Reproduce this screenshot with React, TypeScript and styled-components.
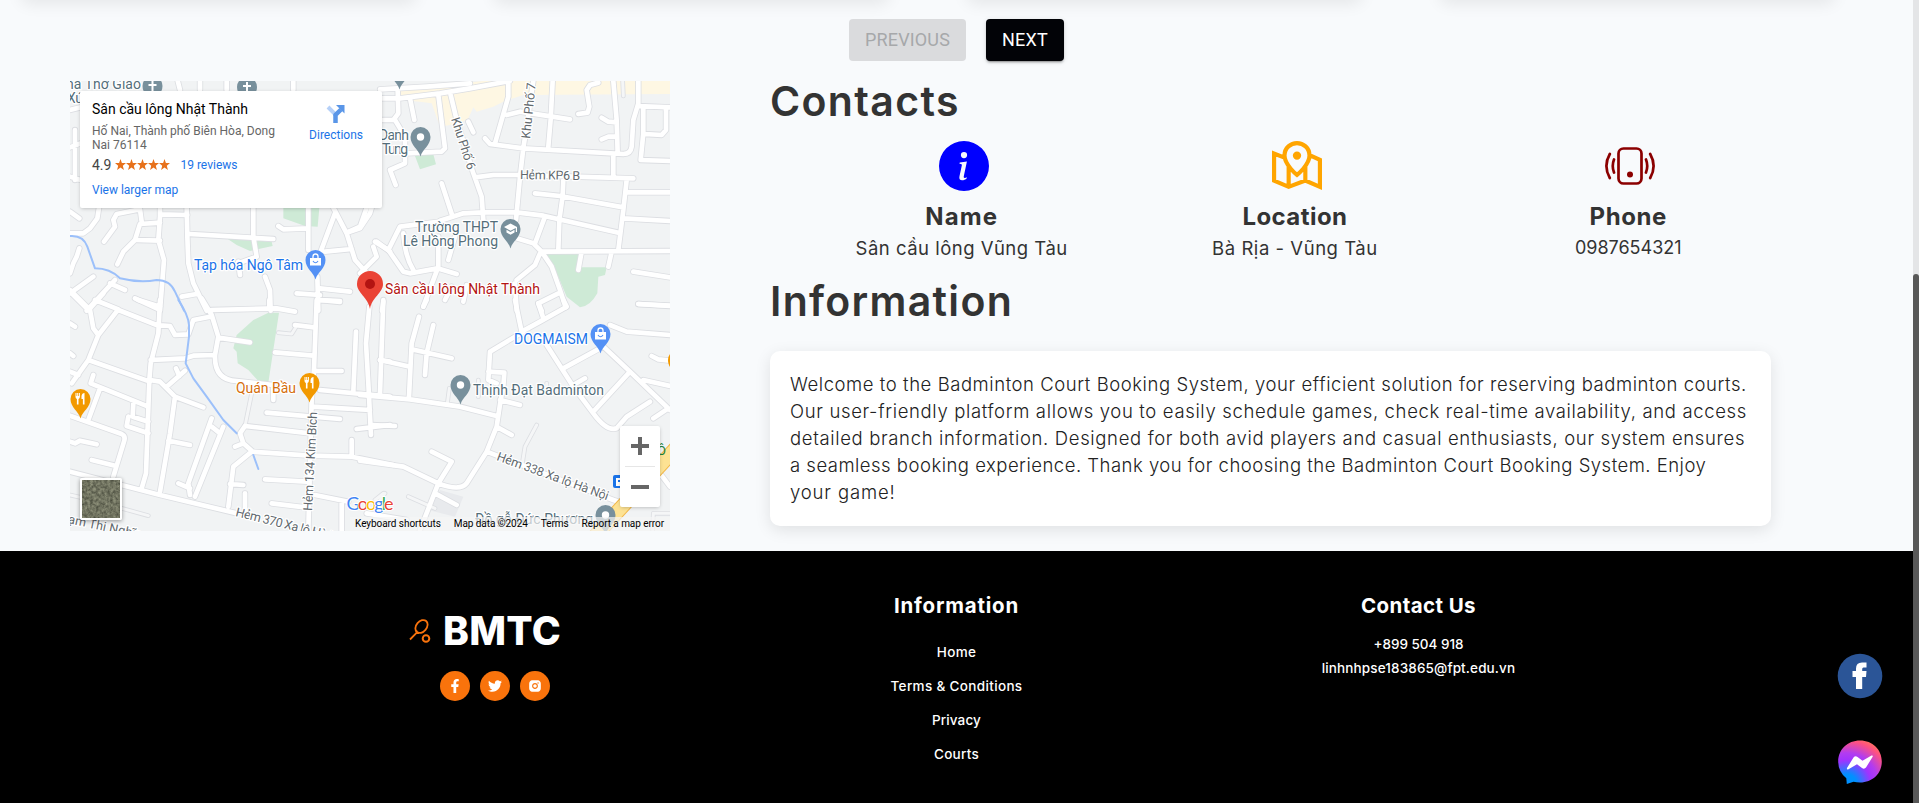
import React from "react";
import styled, { createGlobalStyle } from "styled-components";
import { BsInfoCircleFill } from "react-icons/bs";
import { GrMapLocation } from "react-icons/gr";
import { FaFacebookF, FaTwitter } from "react-icons/fa";
import { RiInstagramFill } from "react-icons/ri";

const Global = createGlobalStyle`
  * { box-sizing: border-box; }
  body { margin: 0; background: #f8fafc; font-family: Inter, sans-serif; color: #333; overflow: hidden; }
  p, h2, h3 { margin: 0; }
`;

type Tile = {
  x: number;
  y: number;
  roads: string;
  lanes?: string;
  river?: string;
  parks: string;
};

/* Map geometry is stored per quadrant, three units to the pixel. */
const tiles: Tile[] = [
  {
    x: -10, y: -11,
    roads:
      "M350 20L360 60M420 30V60M500 30V60M700 30V60M30 120L62 112M30 232L62 220M30 320L62 330M45 180V330M300 410L300 440L295 510L312 570L300 722M380 410L382 500L385 580L400 640L440 722M300 433L382 435M300 458L240 462L225 510L190 545L172 583M230 510L300 512M132 515L165 470L160 450L170 432L240 418L245 455M30 425L58 445M30 490L70 490L90 475L112 445L117 413M58 535L50 560L40 580L30 610M30 670L100 620M30 665L80 715M80 722L165 630M150 640L195 660M225 685L300 720M390 492L640 507M580 413L580 500L590 560M745 413V540M655 468L670 478L745 475M820 413L860 490L885 570L930 620M825 430L780 550M860 488L900 475L930 430L935 413M795 545L875 537M950 515L990 545M772 620L775 722M710 670L780 675M780 655L870 665M780 690L840 693M615 620L630 660L632 722M535 575L540 615M365 680L410 672M540 578L590 560",
    river: "M30 498Q70 495 82 530L105 595Q150 595 180 625Q240 640 290 630Q330 630 345 665L372 722",
    parks: "M670 413H778L773 470L735 468L670 445ZM500 505L635 515L638 528L570 543L530 525Z",
  },
  {
    x: 290, y: -11,
    roads:
      "M60 85L120 85L240 70L330 55L450 33M60 58L200 50L330 40M113 60L115 130L100 150H66M105 150L135 200V280L90 300L107 345M150 85L163 150M235 75L255 235L245 245L140 250M272 75L290 150M340 310L365 380L370 450M290 150L340 310M325 155L340 187M445 33V80L405 220M440 135L480 125L630 148M375 205L390 222L490 235L790 252Q812 252 815 230L820 150L835 100V33M520 33L490 235L480 320L468 450M578 33L572 148L565 230M715 38L690 45L680 60L688 110L683 128L655 132M760 33L770 150L773 250M725 143L745 155L770 157M725 208L745 200H770M835 108L930 112M850 115V190L842 270L930 273M918 115V180L905 195L855 192M760 255V318M345 322L400 315H480L820 325M800 330L790 420L775 540M800 367H930M525 370L600 378L790 412M610 330L608 378L598 450L595 540M790 445L930 453M278 440L310 430L370 427H470L550 437L775 488M245 340L278 440L240 452M553 445L525 520M470 505L520 520L545 545L930 543M545 545L575 590L600 660L617 712M540 550L525 585L470 630M665 545L655 600M755 545L745 590M820 605L930 622M835 702L930 708M240 455L120 470L85 540M45 515L85 540L130 605L150 610L232 595L290 612M130 490Q135 560 160 600M235 500V590L190 710M285 500L265 570M40 530L50 560L0 610M20 413L0 470L-40 488M465 640L470 722M595 670L535 700L545 722M255 690L275 650M310 695L320 645M70 695L66 722",
    lanes: "M788 33L790 78",
    parks: "M548 550H665L660 592H740L735 615L715 620L712 670Q690 710 660 712L620 680L595 620ZM165 258L220 253L228 283L180 298Z",
  },
  {
    x: -10, y: 219,
    roads:
      "M30 -30L90 30L100 85L115 105M90 25L130 -20M105 0L175 28L115 105L85 180L35 250M175 30L290 75L330 78L345 105L385 103L400 60L450 50M235 0L300 20M300 0L295 100L272 190L268 240L258 520L245 565M30 70L45 80M30 160L40 168M85 180L270 245M272 180L375 175L400 167L465 165M425 -5L455 45L475 110L465 165Q462 240 530 243L640 255M455 30L650 25L705 35M628 0V25M475 113L570 127M100 225L92 250L265 320M120 265L85 360M220 310L218 350L265 365M205 350L200 378L265 400M30 215L55 225M30 347L185 402Q198 408 192 425L160 530M270 240L300 245L345 290L430 322M345 290L330 400L300 575M320 260L375 212M348 205L358 228M325 422L390 435M455 355L385 550L390 585M455 380L480 400M490 380L405 590M355 550L390 565M30 515L300 585L530 640M30 425L45 430L60 422L110 433M95 480L165 497M575 455L520 500L505 620M510 552L550 555M555 580V630M555 378L540 400L550 430L575 452M525 440L550 430M555 378L750 400M575 455L750 467L875 470L1000 495M875 420V470M620 338L840 357M770 0L762 210L755 300L745 692M765 213L845 213M645 157L760 167M705 75L762 82M780 270L990 290M760 320L930 330M888 95L880 275M928 20L918 130L925 250L933 405M970 0L960 280M960 180L990 185M890 387L990 375M615 538L740 545M635 610L735 622M765 585L865 605M845 610V692M640 260V300M780 0L840 6",
    lanes: "M655 98L695 102L710 78M575 280L555 378M30 585L60 592M185 625L265 647M945 600L970 580",
    river: "M355 0Q385 45 387 75V110L377 190L400 235L440 290L490 360L530 400M580 465L595 507",
    parks: "M657 38L625 248L597 245L565 210L533 190L530 155L520 145L530 105L580 60L625 38Z",
  },
  {
    x: 290, y: 219,
    roads:
      "M60 180L150 200M177 50L155 130L147 290M155 148L275 175M220 75L200 160L195 225M0 285L150 298L300 320L410 348M33 375L105 378M490 95L390 155L385 240L410 250M385 215L433 218L430 260L422 300L410 380L380 455L320 550Q300 575 235 550L130 500L0 482M420 300L480 315M410 380L455 405M465 0L485 95L540 65L620 20L610 0M535 10L550 55M560 135L640 260L700 340Q740 395 770 385L800 350L870 305M610 205L720 145M720 130L810 215L930 330M810 215L700 335M640 255L675 235M750 75L800 95L930 105M835 12L930 17M875 168L895 178L930 182M850 240L930 258M925 325L880 355M380 455L760 600L790 610M215 455L275 485L235 550L180 690M225 580L290 615M900 520L930 560M190 20L200 0M20 640L140 660",
    lanes: "M487 490L495 440L530 375M145 590L225 625M262 310L268 265M355 240V290M878 690L880 640L930 640M60 600L75 580M560 250V260",
    parks: "",
  },
];

type Pin = { x: number; y: number; color: string; kind: "dot" | "cross" | "bag" | "fork" | "cap" };
const pins: Pin[] = [
  { x: 82.5, y: 5, color: "#78909c", kind: "cross" },
  { x: 177, y: 6, color: "#78909c", kind: "cross" },
  { x: 350.5, y: 56, color: "#78909c", kind: "dot" },
  { x: 329.5, y: -11, color: "#78909c", kind: "dot" },
  { x: 440.5, y: 148, color: "#78909c", kind: "cap" },
  { x: 245.5, y: 179, color: "#5491f5", kind: "bag" },
  { x: 530.5, y: 253, color: "#5491f5", kind: "bag" },
  { x: 239.5, y: 302, color: "#f29900", kind: "fork" },
  { x: 10.5, y: 318, color: "#f29900", kind: "fork" },
  { x: 390.5, y: 304, color: "#78909c", kind: "dot" },
  { x: 535.5, y: 434, color: "#78909c", kind: "dot" },
  { x: 608, y: 279, color: "#f29900", kind: "dot" },
];

const MapPin = ({ x, y, color, kind }: Pin) => (
  <g transform={`translate(${x} ${y})`}>
    <path d="M0 19.500C-2 12-10 8.500-10 0A10 10 0 0 1 10 0C10 8.500 2 12 0 19.500Z" fill={color} />
    {kind === "dot" && <circle r="3.700" fill="#fff" />}
    {kind === "cross" && <path d="M0-5V6M-4-1H4" stroke="#fff" strokeWidth="2" />}
    {kind === "bag" && (
      <g>
        <path d="M-5.500-2H5.500V5.500H-5.500Z" fill="#fff" />
        <path d="M-2.500-2V-3.500A2.500 2.500 0 0 1 2.500-3.500V-2" fill="none" stroke="#fff" strokeWidth="1.300" />
        <path d="M-2.500 1Q0 4.500 2.500 1" fill="none" stroke={color} strokeWidth="1.200" />
      </g>
    )}
    {kind === "fork" && (
      <g fill="#fff">
        <path d="M-5-6H-4V-3H-3.300V-6H-2.300V-3H-1.600V-6H-.6V-2Q-.8-.2-2-.1V5.500H-3.600V-.1Q-4.900-.2-5-2Z" />
        <path d="M4-6V5.500H2.400V0H1V-3Q1.500-6 4-6Z" />
      </g>
    )}
    {kind === "cap" && (
      <path d="M-6.500-2L0-5.500L6.500-2V3H5.300V-1L0 1.700ZM-4 .8L0 3L4 .8V3.500L0 5.700L-4 3.500Z" fill="#fff" />
    )}
  </g>
);

type LabelProps = { x: number; y: number; w: number; color: string; size?: number; turn?: number; children: string };
const Label = ({ x, y, w, color, size = 14, turn = 0, children }: LabelProps) => (
  <text
    transform={`translate(${x} ${y}) rotate(${turn})`}
    textLength={w}
    fontSize={size}
    fontFamily="Roboto, sans-serif"
    fill={color}
    stroke="#fff"
    strokeWidth="2.500"
    strokeLinejoin="round"
    paintOrder="stroke"
  >
    {children}
  </text>
);

const MapSvg = styled.svg`
  display: block;
  width: 600px;
  height: 450px;
`;

const slate = "#546e7a";
const street = "#62696e";

const MapDrawing = () => {
  const at = (t: Tile) => `translate(${t.x} ${t.y}) scale(.33333)`;
  return (
    <MapSvg viewBox="0 0 600 450">
      <rect width="600" height="450" fill="#f1f3f4" />
      <path transform="translate(290 -11) scale(.33333)" fill="#fef7e3" d="M120 60L370 33H930V72L490 75L430 95L400 110L350 125L340 112L325 145L300 160L240 170L215 100L180 95L120 90Z" />
      <path transform="translate(290 219) scale(.33333)" fill="#e8eaed" d="M240 570L310 590L285 650L205 630Z" />
      {tiles.map((t, i) => <path key={i} transform={at(t)} d={t.parks} fill="#ceead6" />)}
      <g fill="none" strokeLinecap="round" strokeLinejoin="round">
        {tiles.map((t, i) => (
          <g key={i} transform={at(t)} stroke="#dcdee2">
            <path d={t.roads} strokeWidth="19" />
            {t.lanes && <path d={t.lanes} strokeWidth="14" />}
          </g>
        ))}
        {tiles.map((t, i) => (
          <g key={i} transform={at(t)}>
            {t.lanes && <path d={t.lanes} strokeWidth="9" stroke="#f5f6f7" />}
            <path d={t.roads} strokeWidth="14" stroke="#fff" />
          </g>
        ))}
        {tiles.map((t, i) => t.river && <path key={i} transform={at(t)} d={t.river} stroke="#9cc0fa" strokeWidth="6" />)}
        <path d="M608 365L526 454" stroke="#f2b84b" strokeWidth="15" />
        <path d="M608 365L526 454" stroke="#fde293" strokeWidth="13" />
      </g>
      {pins.map((p, i) => <MapPin key={i} {...p} />)}
      <rect x="543" y="394" width="13" height="13" rx="2" fill="#1a73e8" />
      <path d="M546 397H553V399H548V401H553V403H550V405H546Z" fill="#fff" />
      <text x="587" y="374" fontSize="13" fontFamily="Roboto, sans-serif" fill="#188038">Ô</text>
      <Label x={-4} y={8} w={75} color={slate}>nà Thờ Giáo</Label>
      <Label x={-3} y={22} w={17} color={slate}>Xứ</Label>
      <Label x={309} y={59} w={30} color={slate}>Danh</Label>
      <Label x={312} y={73} w={26} color={slate}>Tung</Label>
      <Label x={345} y={151} w={83} color={slate}>Trường THPT</Label>
      <Label x={333} y={165} w={95} color={slate}>Lê Hồng Phong</Label>
      <Label x={124} y={189} w={109} color="#1a73e8">Tạp hóa Ngô Tâm</Label>
      <Label x={315} y={213} w={155} color="#b31412">Sân cầu lông Nhật Thành</Label>
      <Label x={444} y={263} w={74} color="#1a73e8">DOGMAISM</Label>
      <Label x={166} y={312} w={60} color="#d56e0c">Quán Bầu</Label>
      <Label x={403} y={314} w={131} color={slate}>Thịnh Đạt Badminton</Label>
      <Label x={405} y={443} w={118} color={slate}>Đồ gỗ Đức Phương</Label>
      <Label x={450} y={98} w={60} size={12.5} turn={1} color={street}>Hẻm KP6 B</Label>
      <Label x={381} y={38} w={54} size={12.5} turn={72} color={street}>Khu Phố 6</Label>
      <Label x={460} y={58} w={56} size={12.5} turn={-84} color={street}>Khu Phố 7</Label>
      <Label x={242} y={430} w={99} size={12.5} turn={-87} color={street}>Hẻm 134 Kim Bích</Label>
      <Label x={426} y={379} w={118} size={12.5} turn={20} color={street}>Hẻm 338 Xa lộ Hà Nội</Label>
      <Label x={165} y={435} w={114} size={12.5} turn={14} color={street}>Hẻm 370 Xa lộ Hà Nội</Label>
      <Label x={-17} y={439} w={90} size={12.5} turn={12} color={street}>Phạm Thị Nghĩa</Label>
      <path d="M300 228C298 216 287 212 287 203A13 13 0 0 1 313 203C313 212 302 216 300 228Z" fill="#ea4335" />
      <circle cx="300" cy="203" r="5" fill="#b31412" />
      <text x="276.500" y="429" fontSize="18" textLength="47" fontFamily="Lato, sans-serif" stroke="#fff" strokeWidth="2" paintOrder="stroke"><tspan fill="#4285f4">G</tspan><tspan fill="#ea4335">o</tspan><tspan fill="#fbbc04">o</tspan><tspan fill="#4285f4">g</tspan><tspan fill="#34a853">l</tspan><tspan fill="#ea4335">e</tspan></text>
    </MapSvg>
  );
};

const Viewport = styled.div`
  display: flex;
  width: 1919px;
  height: 803px;
  overflow: hidden;
`;
const Page = styled.div`
  width: 1913px;
  height: 803px;
`;
const ScrollTrack = styled.div`
  width: 6px;
  height: 803px;
  padding-top: 274px;
  background: #e4e5e7;
`;
const ScrollThumb = styled.div`
  height: 529px;
  background: #585858;
  border-radius: 3px 3px 0 0;
`;
const CardRow = styled.div`
  display: flex;
  gap: 76px;
  height: 19px;
  padding-left: 20px;
`;
const CardEdge = styled.div`
  width: 397px;
  height: 20px;
  margin-top: -20px;
  border-radius: 10px;
  box-shadow: 0 4px 16px rgba(0, 0, 0, 0.08);
`;
const Pager = styled.div`
  display: flex;
  justify-content: center;
  gap: 20px;
  height: 42px;
`;
const PagerButton = styled.button<{ $off?: boolean }>`
  height: 42px;
  width: ${(p) => (p.$off ? 117 : 78)}px;
  padding: 0;
  border: 0;
  border-radius: 4px;
  font: 400 18px/42px Roboto, sans-serif;
  letter-spacing: ${(p) => (p.$off ? 0.15 : 0.2)}px;
  color: ${(p) => (p.$off ? "#a6a8aa" : "#fff")};
  background: ${(p) => (p.$off ? "#dadbdd" : "#020307")};
  box-shadow: ${(p) => (p.$off ? "none" : "0 3px 1px -2px rgba(0,0,0,.2), 0 2px 2px rgba(0,0,0,.14), 0 1px 5px rgba(0,0,0,.12)")};
`;
const Main = styled.main`
  display: flex;
  gap: 100px;
  height: 490px;
  padding: 20px 0 0 70px;
`;
const MapFrame = styled.div`
  position: relative;
  width: 600px;
  height: 450px;
  overflow: hidden;
  font-family: Roboto, sans-serif;
`;
const PlaceCard = styled.div`
  position: absolute;
  left: 10px;
  top: 10px;
  display: flex;
  justify-content: space-between;
  width: 302px;
  height: 117px;
  padding: 9px 19px 0 12px;
  background: #fff;
  border-radius: 2px;
  box-shadow: 0 1px 4px -1px rgba(0, 0, 0, 0.3);
  font-size: 12px;
  line-height: 14px;
  color: #666;
`;
const PlaceName = styled.div`
  font-size: 14px;
  font-weight: 400;
  line-height: 18px;
  color: #000;
  margin-bottom: 6px;
`;
const Rating = styled.div`
  display: flex;
  align-items: center;
  height: 18px;
  margin: 4px 0 9px;
  font-size: 14px;
  color: #444;
`;
const Stars = styled.svg`
  width: 55px;
  height: 12px;
  margin: 0 10px 0 4px;
`;
const MapLink = styled.a<{ $gap?: number }>`
  display: block;
  margin-top: ${(p) => p.$gap ?? 0}px;
  font-size: 12px;
  color: #1a73e8;
`;
const Directions = styled.div`
  display: flex;
  flex-direction: column;
  align-items: center;
  padding-top: 4px;
`;
const ZoomBox = styled.div`
  position: absolute;
  left: 550px;
  top: 345px;
  width: 40px;
  height: 81px;
  background: #fff;
  border-radius: 2px;
  box-shadow: 0 1px 4px -1px rgba(0, 0, 0, 0.3);
`;
const Satellite = styled.div`
  position: absolute;
  left: 10px;
  top: 397px;
  width: 42px;
  height: 42px;
  border: 2px solid #fff;
  border-radius: 2px;
  overflow: hidden;
  box-shadow: 0 1px 4px rgba(0, 0, 0, 0.4);
`;
const Attribution = styled.div`
  position: absolute;
  right: 0;
  bottom: 0;
  display: flex;
  gap: 13px;
  height: 14px;
  padding: 0 6px 0 5px;
  background: rgba(245, 245, 245, 0.7);
  font-size: 10px;
  line-height: 14px;
  letter-spacing: -0.06px;
  color: #000;
  white-space: nowrap;
`;
const Details = styled.section`
  width: 1001px;
`;
const Title = styled.h2<{ $ls: number; $h: number }>`
  height: ${(p) => p.$h}px;
  font-size: 41px;
  font-weight: 600;
  line-height: 40px;
  letter-spacing: ${(p) => p.$ls}px;
`;
const Contacts = styled.div`
  display: grid;
  grid-template-columns: repeat(3, 333.3px);
  height: 140px;
  padding-left: 25px;
`;
const Contact = styled.div`
  display: flex;
  flex-direction: column;
  align-items: center;
  svg { width: 50px; height: 50px; margin-left: 4px; }
`;
const ContactTitle = styled.h3<{ $ls: number }>`
  margin-top: 11px;
  font-size: 24px;
  font-weight: 700;
  line-height: 30px;
  letter-spacing: ${(p) => p.$ls}px;
`;
const ContactValue = styled.p<{ $ls?: number }>`
  margin-top: 3px;
  font-size: ${(p) => (p.$ls ? 18.5 : 18)}px;
  line-height: 26px;
  letter-spacing: ${(p) => p.$ls ?? 0}px;
  white-space: nowrap;
`;
const Welcome = styled.div`
  height: 175px;
  padding: 20px;
  background: #fff;
  border-radius: 10px;
  box-shadow: 0 4px 16px rgba(0, 0, 0, 0.1);
`;
const Line = styled.span<{ $ls: number }>`
  display: block;
  width: max-content;
  font-size: 18.5px;
  font-weight: 300;
  line-height: 27px;
  color: #222;
  letter-spacing: ${(p) => p.$ls}px;
  white-space: nowrap;
`;
const Footer = styled.footer`
  display: flex;
  height: 252px;
  background: #000;
  color: #fff;
`;
const Brand = styled.div`
  width: 718px;
  padding: 60px 0 0 409px;
`;
const BrandRow = styled.div`
  display: flex;
  align-items: center;
  gap: 12px;
  height: 40px;
`;
const BrandName = styled.span`
  font-size: 39px;
  font-weight: 800;
  line-height: 40px;
  letter-spacing: 0.3px;
`;
const Socials = styled.div`
  display: flex;
  gap: 10px;
  margin: 20px 0 0 31px;
`;
const Social = styled.a`
  display: flex;
  align-items: center;
  justify-content: center;
  width: 30px;
  height: 30px;
  border-radius: 50%;
  background: #f9730c;
  color: #fff;
  font-size: 14px;
`;
const FootCol = styled.div<{ $w: number }>`
  display: flex;
  flex-direction: column;
  align-items: center;
  width: ${(p) => p.$w}px;
  padding-top: 40px;
`;
const FootTitle = styled.h3<{ $ls: number }>`
  font-size: 20.5px;
  font-weight: 700;
  line-height: 30px;
  letter-spacing: ${(p) => p.$ls}px;
`;
const FootLink = styled.a<{ $top: number; $ls: number }>`
  margin-top: ${(p) => p.$top}px;
  font-size: 13.5px;
  font-weight: 500;
  line-height: 20px;
  letter-spacing: ${(p) => p.$ls}px;
`;
const Floating = styled.div`
  position: absolute;
  left: 1837px;
  top: 653px;
  display: flex;
  flex-direction: column;
  gap: 41px;
  svg { display: block; }
`;

const PhoneIcon = () => (
  <svg viewBox="0 0 50 50" fill="none" stroke="darkred" strokeWidth="2.700" strokeLinecap="round">
    <rect x="13.500" y="7.500" width="23" height="35" rx="5" />
    <circle cx="25" cy="33.500" r="3" fill="darkred" stroke="none" />
    <path d="M9 18.500Q6.500 25 9 31.500M4.800 13Q-2 25 4.800 37M41 18.500Q43.500 25 41 31.500M45.200 13Q52 25 45.200 37" />
  </svg>
);

const App = () => (
  <>
    <Global />
    <Viewport>
      <Page>
        <CardRow><CardEdge /><CardEdge /><CardEdge /><CardEdge /></CardRow>
        <Pager>
          <PagerButton $off>PREVIOUS</PagerButton>
          <PagerButton>NEXT</PagerButton>
        </Pager>
        <Main>
          <MapFrame>
            <MapDrawing />
            <PlaceCard>
              <div>
                <PlaceName>Sân cầu lông Nhật Thành</PlaceName>
                <div>Hố Nai, Thành phố Biên Hòa, Dong<br />Nai 76114</div>
                <Rating>
                  4.9
                  <Stars viewBox="0 0 55 12" fill="#e7711b">
                    {[0, 11, 22, 33, 44].map((x) => (
                      <path key={x} transform={`translate(${x} 0)`} d="M5.500 0L6.900 4L11 4.100L7.800 6.700L8.900 10.900L5.500 8.500L2.100 10.900L3.200 6.700L0 4.100L4.100 4Z" />
                    ))}
                  </Stars>
                  <MapLink>19 reviews</MapLink>
                </Rating>
                <MapLink>View larger map</MapLink>
              </div>
              <Directions>
                <svg width="20" height="20" viewBox="0 0 20 20">
                  <path d="M2 3L9 10V12" fill="none" stroke="#b5d0f8" strokeWidth="4" />
                  <path d="M9.500 19V11L15 5.500" fill="none" stroke="#5a96e8" strokeWidth="4.500" />
                  <path d="M10 1H18.500V9.500Z" fill="#5a96e8" />
                </svg>
                <MapLink $gap={4}>Directions</MapLink>
              </Directions>
            </PlaceCard>
            <ZoomBox>
              <svg width="40" height="81" viewBox="0 0 40 81">
                <path d="M11 20H29M20 11V29M11 61H29" stroke="#666" strokeWidth="4" />
                <path d="M5 40.500H35" stroke="#e6e6e6" />
              </svg>
            </ZoomBox>
            <Satellite>
              <svg width="38" height="38">
                <filter id="grain" colorInterpolationFilters="sRGB">
                  <feTurbulence type="fractalNoise" baseFrequency=".35" numOctaves="3" seed="4" />
                  <feColorMatrix values="0.400 0 0 0 .24  0.400 0 0 0 .25  0.350 0 0 0 .2  0 0 0 0 1" />
                </filter>
                <rect width="38" height="38" filter="url(#grain)" />
              </svg>
            </Satellite>
            <Attribution>
              <span>Keyboard shortcuts</span><span>Map data ©2024</span><span>Terms</span><span>Report a map error</span>
            </Attribution>
          </MapFrame>
          <Details>
            <Title $h={60} $ls={1.35}>Contacts</Title>
            <Contacts>
              <Contact>
                <BsInfoCircleFill color="blue" />
                <ContactTitle $ls={1.1}>Name</ContactTitle>
                <ContactValue $ls={0.49}>Sân cầu lông Vũng Tàu</ContactValue>
              </Contact>
              <Contact>
                <GrMapLocation color="orange" />
                <ContactTitle $ls={0.45}>Location</ContactTitle>
                <ContactValue $ls={0.54}>Bà Rịa - Vũng Tàu</ContactValue>
              </Contact>
              <Contact>
                <PhoneIcon />
                <ContactTitle $ls={0.6}>Phone</ContactTitle>
                <ContactValue>0987654321</ContactValue>
              </Contact>
            </Contacts>
            <Title $h={70} $ls={1.3}>Information</Title>
            <Welcome>
              <Line $ls={0.56}>Welcome to the Badminton Court Booking System, your efficient solution for reserving badminton courts.</Line>
              <Line $ls={0.655}>Our user-friendly platform allows you to easily schedule games, check real-time availability, and access</Line>
              <Line $ls={0.65}>detailed branch information. Designed for both avid players and casual enthusiasts, our system ensures</Line>
              <Line $ls={0.49}>a seamless booking experience. Thank you for choosing the Badminton Court Booking System. Enjoy</Line>
              <Line $ls={0.85}>your game!</Line>
            </Welcome>
          </Details>
        </Main>
        <Footer>
          <Brand>
            <BrandRow>
              <svg width="22" height="24" viewBox="0 0 22 24" fill="none" stroke="#f9730c">
                <ellipse cx="12.500" cy="7.500" rx="5.200" ry="7.200" transform="rotate(40 12.500 7.500)" strokeWidth="1.800" />
                <path d="M1 20.500L7.500 14V11.500M7.500 14H10" strokeWidth="1.800" />
                <circle cx="17" cy="19.500" r="3.300" strokeWidth="2" />
              </svg>
              <BrandName>BMTC</BrandName>
            </BrandRow>
            <Socials>
              <Social><FaFacebookF /></Social>
              <Social><FaTwitter /></Social>
              <Social><RiInstagramFill /></Social>
            </Socials>
          </Brand>
          <FootCol $w={477}>
            <FootTitle $ls={0.8}>Information</FootTitle>
            <FootLink $top={21} $ls={0.35}>Home</FootLink>
            <FootLink $top={14} $ls={0.34}>Terms &amp; Conditions</FootLink>
            <FootLink $top={14} $ls={0.1}>Privacy</FootLink>
            <FootLink $top={14} $ls={0.28}>Courts</FootLink>
          </FootCol>
          <FootCol $w={447}>
            <FootTitle $ls={0.4}>Contact Us</FootTitle>
            <FootLink $top={13} $ls={0}>+899 504 918</FootLink>
            <FootLink $top={4} $ls={0.13}>linhnhpse183865@fpt.edu.vn</FootLink>
          </FootCol>
        </Footer>
      </Page>
      <ScrollTrack><ScrollThumb /></ScrollTrack>
    </Viewport>
    <Floating>
      <svg width="46" height="46" viewBox="0 0 46 46">
        <circle cx="23" cy="23" r="22.300" fill="#2b5597" />
        <path d="M19 36V24H15.500V18H19V15.500Q19 9.500 25 9.500H29.500V14.500H26.500Q25.200 14.500 25.200 16V18H29.500L29 24H25.200V36Z" fill="#fff" />
      </svg>
      <svg width="46" height="46" viewBox="0 0 46 46">
        <defs>
          <radialGradient id="msg" cx=".2" cy="1" r="1.100">
            <stop offset="0" stopColor="#0090ff" /><stop offset=".2" stopColor="#0090ff" />
            <stop offset=".5" stopColor="#a033ff" /><stop offset=".65" stopColor="#b23cf0" />
            <stop offset=".9" stopColor="#ff5280" /><stop offset="1" stopColor="#ff7061" />
          </radialGradient>
        </defs>
        <path d="M23 .5C35.500.5 44.800 9.500 44.800 21.500S35.500 42.500 23 42.500Q19.500 42.500 16.500 41.700L9.800 44L9.300 38.300Q1.200 31.500 1.200 21.500C1.200 9.500 10.500.5 23 .5Z" fill="url(#msg)" />
        <path d="M10 28L16.500 17.500Q18.300 15.500 20.500 17L25.500 20.800L34.500 15.500Q36.500 15 35.500 17L29 27.500Q27.300 29.500 25 28L20 24.200L11.500 29.300Q9.500 30 10 28Z" fill="#fff" />
      </svg>
    </Floating>
  </>
);

export default App;
